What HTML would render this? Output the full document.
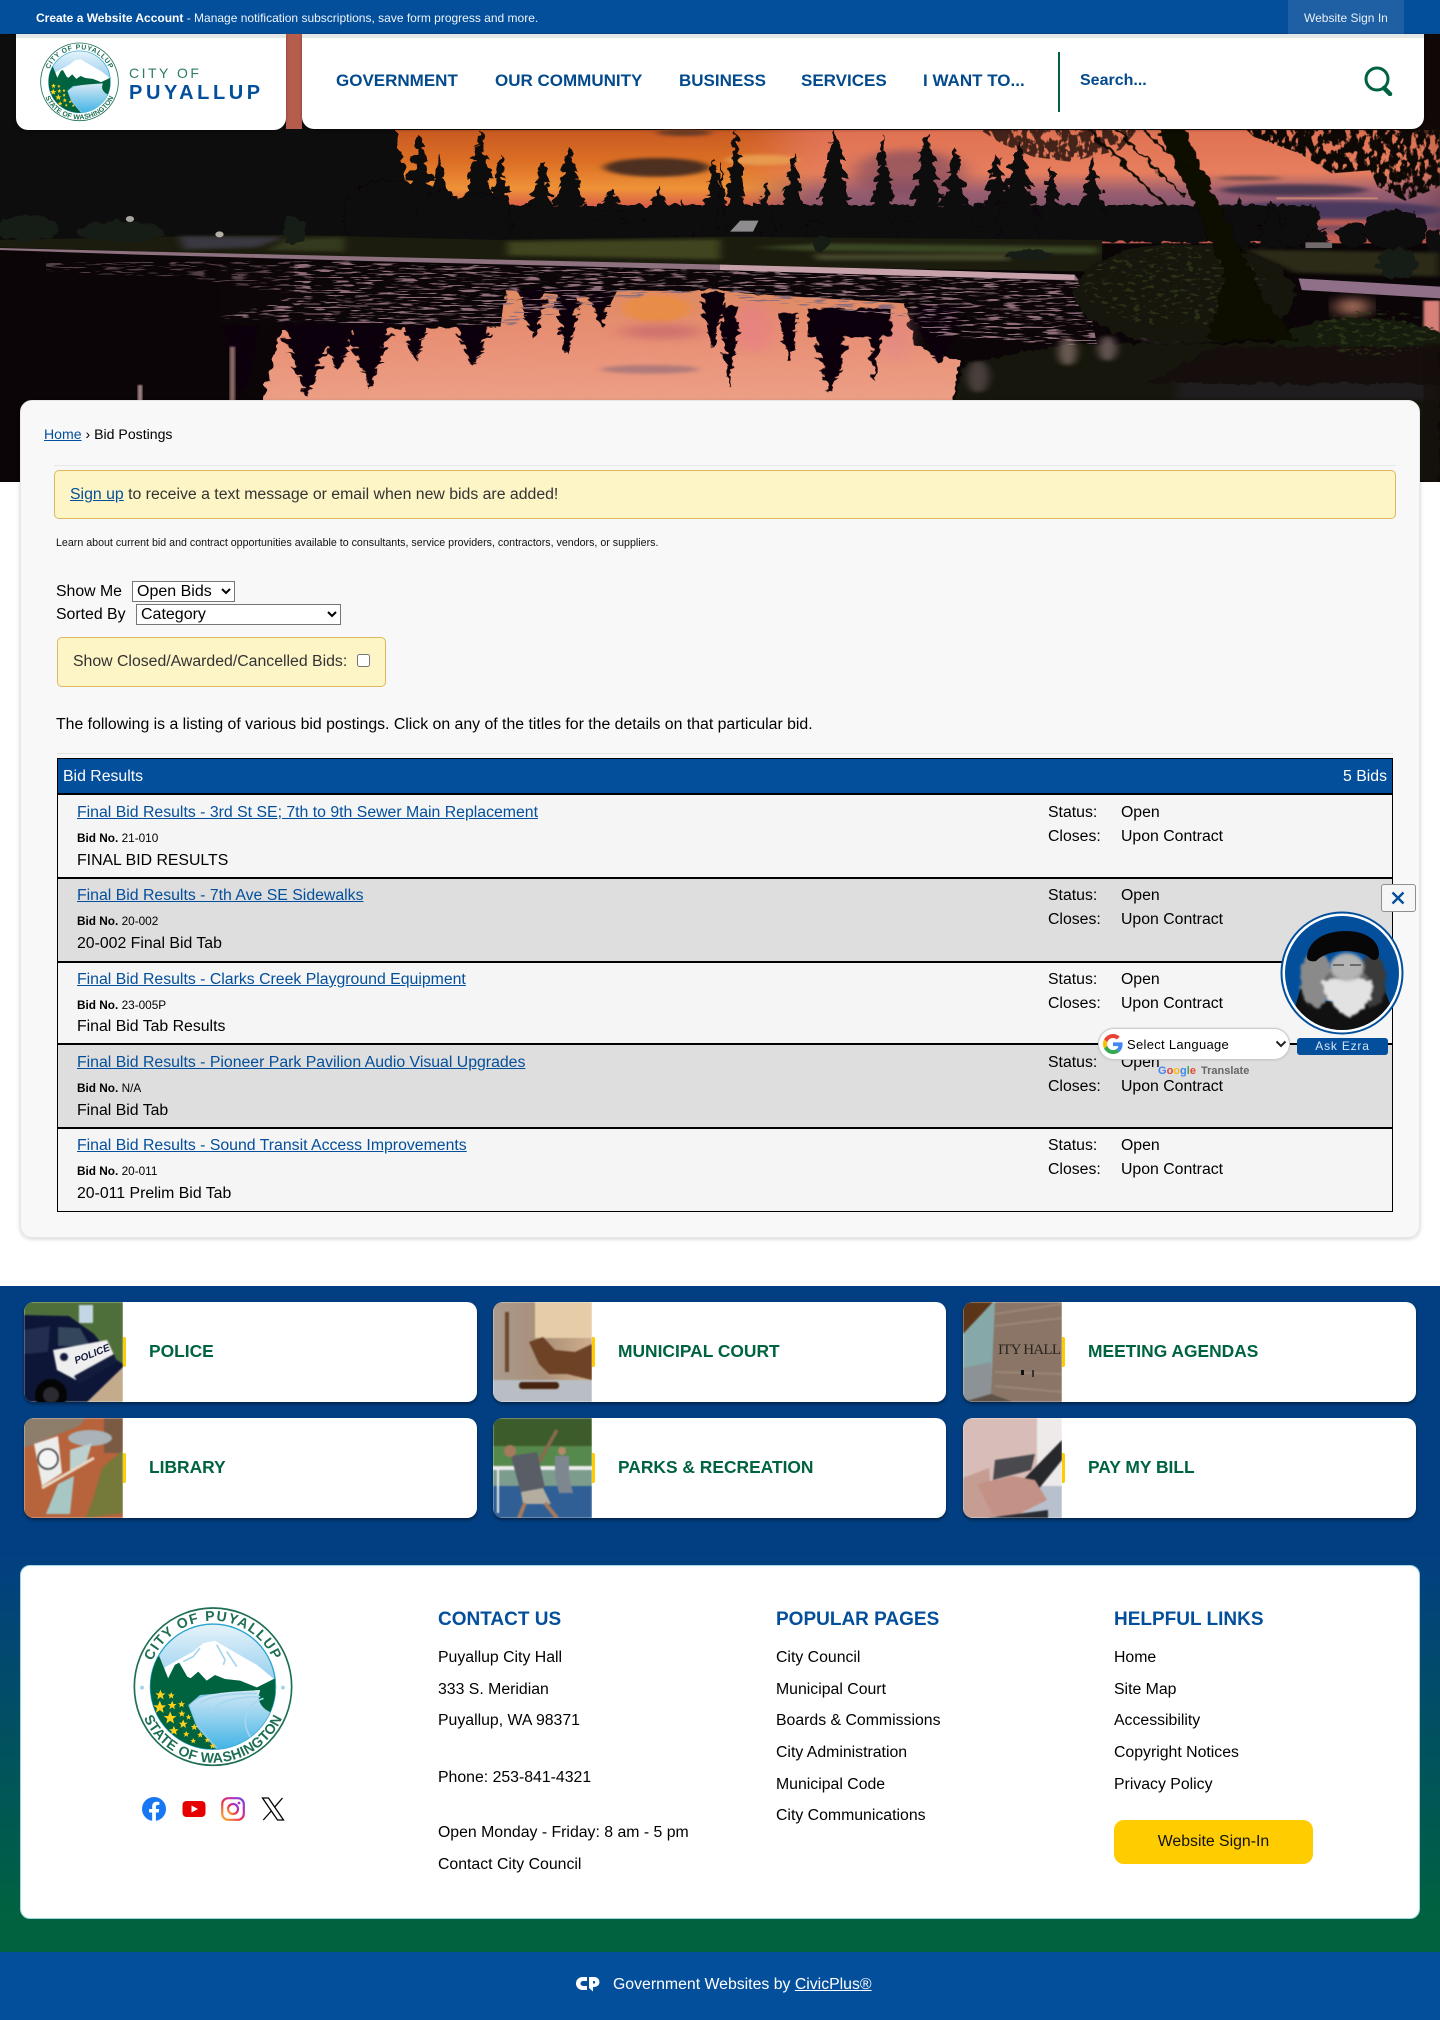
<!DOCTYPE html>
<html lang="en"><head><meta charset="utf-8"><title>Bid Postings - City of Puyallup</title>
<style>
html,body{margin:0;padding:0;background:#fff}
body{position:relative;width:1440px;height:2020px;overflow:hidden;font-family:"Liberation Sans",Arial,sans-serif;font-size:15.84px;color:#000}
.a{position:absolute}
.t{position:absolute;white-space:nowrap;line-height:20px;margin-top:1px}
a{color:inherit;text-decoration:none}
.lk{color:#034f9b;text-decoration:underline}
.nav{font-weight:700;font-size:17px;color:#034a8c;top:70px}
.row{position:absolute;left:58px;width:1334px;height:82px}
.tile{position:absolute;width:453px;height:100px;background:#fff;border-radius:10px;overflow:hidden;box-shadow:0 2px 3px rgba(0,0,0,.45)}
.tile svg{position:absolute;left:0;top:0}
.tick{position:absolute;left:99px;top:35px;width:3px;height:30px;background:#ffcc00;border-radius:0 2px 2px 0}
.tile span{position:absolute;left:125px;top:39px;line-height:20px;font-weight:700;font-size:17.4px;color:#00633f;white-space:nowrap}
.fh{font-weight:700;font-size:19px;color:#034f9b}
.bn{font-size:11.8px}
select{font-family:"Liberation Sans",Arial,sans-serif;font-size:16px;padding:0;margin:0;box-sizing:border-box;position:absolute;background:#fff;color:#000}
</style></head><body>

<!-- HERO -->
<div class="a" style="left:0;top:34px;width:1440px;height:448px;overflow:hidden;background:#0a0506">
<svg width="1440" height="448" viewBox="0 -288 3136 1344" preserveAspectRatio="none" style="display:block">
<defs>
<linearGradient id="skyL" gradientUnits="userSpaceOnUse" x1="0" y1="0" x2="0" y2="320"><stop offset="0" stop-color="#c85a22"/><stop offset=".3" stop-color="#dc6f24"/><stop offset=".55" stop-color="#ee9238"/><stop offset=".72" stop-color="#d85d4a"/><stop offset="1" stop-color="#b04a3c"/></linearGradient>
<linearGradient id="skyR" gradientUnits="userSpaceOnUse" x1="0" y1="0" x2="0" y2="320"><stop offset="0" stop-color="#df7152"/><stop offset=".4" stop-color="#e67e5e"/><stop offset=".58" stop-color="#9a5e70"/><stop offset=".9" stop-color="#6a4a68"/><stop offset="1" stop-color="#c05c50"/></linearGradient>
<linearGradient id="refl" gradientUnits="userSpaceOnUse" x1="0" y1="460" x2="0" y2="810"><stop offset="0" stop-color="#dd8a60"/><stop offset=".45" stop-color="#e88f74"/><stop offset="1" stop-color="#ec9f86"/></linearGradient>
<path id="c" d="M0 0L3 12L1.500 12L6 26L3 26L9 42L5 42L12 60L7 60L15 80L9 80L14 100L-14 100L-9 80L-15 80L-7 60L-12 60L-5 42L-9 42L-3 26L-6 26L-1.500 12L-3 12Z"/>
<filter id="skb" x="-5%" y="-5%" width="110%" height="110%" color-interpolation-filters="sRGB"><feGaussianBlur stdDeviation="60 0"/></filter>
<filter id="b5" x="-30%" y="-30%" width="160%" height="160%" color-interpolation-filters="sRGB"><feGaussianBlur stdDeviation="24 12"/></filter>
<filter id="b3" x="-20%" y="-30%" width="140%" height="160%" color-interpolation-filters="sRGB"><feGaussianBlur stdDeviation="9 5"/></filter>
<filter id="b1" color-interpolation-filters="sRGB"><feGaussianBlur stdDeviation="3 2"/></filter>
<filter id="rg" x="-5%" y="-5%" width="110%" height="110%"><feTurbulence type="fractalNoise" baseFrequency=".05 .04" numOctaves="2" seed="3"/><feDisplacementMap in="SourceGraphic" scale="26" xChannelSelector="R" yChannelSelector="G"/></filter>
<filter id="fl" x="0" y="0" width="100%" height="100%" color-interpolation-filters="sRGB"><feTurbulence type="fractalNoise" baseFrequency=".022 .2" numOctaves="2" seed="4" result="n"/><feColorMatrix in="n" type="matrix" values="0 0 0 0 .56 0 0 0 0 .43 0 0 0 0 .48 11 0 0 0 -6.100"/><feComposite in2="SourceGraphic" operator="in"/></filter>
<filter id="fg" x="0" y="0" width="100%" height="100%" color-interpolation-filters="sRGB"><feTurbulence type="fractalNoise" baseFrequency=".06 .09" numOctaves="2" seed="11" result="n"/><feColorMatrix in="n" type="matrix" values="0 0 0 0 .2 0 0 0 0 .23 0 0 0 0 .1 9 0 0 0 -5.200"/><feComposite in2="SourceGraphic" operator="in"/></filter>
<filter id="lv" x="0" y="0" width="100%" height="100%" color-interpolation-filters="sRGB"><feTurbulence type="fractalNoise" baseFrequency=".07 .03" numOctaves="3" seed="6" result="n"/><feColorMatrix in="n" type="matrix" values="0 0 0 0 .06 0 0 0 0 .035 0 0 0 0 .025 12 0 0 0 -4.800"/><feComposite in2="SourceGraphic" operator="in"/></filter>
</defs>
<!-- sky -->
<g filter="url(#skb)">
<rect x="700" y="0" width="1000" height="340" fill="url(#skyL)"/>
<rect x="1700" y="0" width="1500" height="340" fill="url(#skyR)"/>
</g>
<g filter="url(#b3)">
<ellipse cx="1430" cy="112" rx="115" ry="28" fill="#4e3020"/>
<ellipse cx="1490" cy="8" rx="60" ry="10" fill="#6a3c26"/>
<ellipse cx="1660" cy="90" rx="80" ry="16" fill="#e89a4f"/>
<ellipse cx="2818" cy="180" rx="160" ry="17" fill="#4a3850"/>
<ellipse cx="2900" cy="240" rx="240" ry="26" fill="#4c3a5e"/>
<ellipse cx="2720" cy="145" rx="70" ry="5" fill="#5f4448"/>
<ellipse cx="2880" cy="278" rx="160" ry="10" fill="#c05c50"/>
</g>
<ellipse cx="1980" cy="130" rx="120" ry="70" fill="#7a4860" opacity=".65" filter="url(#b5)"/>
<path d="M2780 205H3000" stroke="#d59078" stroke-width="6" opacity=".8"/>
<rect x="0" y="-288" width="20" height="1344" fill="#090506"/>
<!-- trees -->
<g fill="#0f0709" filter="url(#rg)">
<path d="M-30 -288H830L860 0L880 100L900 360H-30Z"/>
<rect x="1080" y="225" width="1790" height="112"/>
<use href="#c" transform="translate(915,10) scale(3.4,3.4)"/>
<use href="#c" transform="translate(955,70) scale(2.3,2.8)"/>
<use href="#c" transform="translate(1045,5) scale(3.2,3.4)"/>
<use href="#c" transform="translate(1090,70) scale(2,2.8)"/>
<use href="#c" transform="translate(1180,95) scale(2.8,2.5)"/>
<use href="#c" transform="translate(1240,50) scale(3.2,2.9)"/>
<use href="#c" transform="translate(1330,175) scale(3.6,1.6)"/>
<use href="#c" transform="translate(1435,170) scale(2.7,1.7)"/>
<use href="#c" transform="translate(1490,210) scale(2,1.3)"/>
<use href="#c" transform="translate(1555,90) scale(2,2.5)"/>
<use href="#c" transform="translate(1603,-5) scale(1.8,3.4)"/>
<use href="#c" transform="translate(1570,100) scale(1,2.4)"/>
<use href="#c" transform="translate(1728,75) scale(2.3,2.6)"/>
<use href="#c" transform="translate(1668,150) scale(1.500,1.900)"/>
<use href="#c" transform="translate(1818,0) scale(3.2,3.4)"/>
<use href="#c" transform="translate(1923,20) scale(2.3,3.2)"/>
<use href="#c" transform="translate(2018,10) scale(3.2,3.3)"/>
<use href="#c" transform="translate(2078,50) scale(2.800,2.900)"/>
<use href="#c" transform="translate(2170,70) scale(3,2.700)"/>
<use href="#c" transform="translate(2218,40) scale(3.700,3)"/>
<use href="#c" transform="translate(2290,110) scale(2.300,2.300)"/>
<use href="#c" transform="translate(2378,80) scale(2.800,2.600)"/>
<use href="#c" transform="translate(2698,200) scale(2.300,1.500)"/>
<use href="#c" transform="translate(2770,215) scale(2.300,1.400)"/>
<use href="#c" transform="translate(2810,235) scale(2,1.200)"/>
<use href="#c" transform="translate(2870,280) scale(2.300,.8)"/>
<ellipse cx="2945" cy="315" rx="32" ry="38"/>
<ellipse cx="3040" cy="300" rx="72" ry="60"/>
<ellipse cx="3125" cy="340" rx="18" ry="40"/>
<ellipse cx="840" cy="265" rx="95" ry="115"/>
<ellipse cx="1040" cy="285" rx="72" ry="95"/>
<ellipse cx="960" cy="280" rx="60" ry="100"/>
</g>
<!-- ground -->
<path d="M0 330L370 320L640 315L1090 330L1568 320L2400 330L2400 425L1568 408L800 384L0 352Z" fill="#1c1c0e"/>
<g filter="url(#b3)">
<path d="M390 318L620 322L560 352L400 358Z" fill="#3a3840"/>
<path d="M630 326L750 322V365L580 360Z" fill="#343a1e"/>
<path d="M1105 335L1568 328V388L1105 376Z" fill="#40451f"/>
<path d="M1640 352L1800 340L2390 350V372L1760 362Z" fill="#3a4724"/>
<path d="M1770 372H2200V392L1780 390Z" fill="#45452a"/>
<path d="M2708 358L3136 368V440L2820 428Z" fill="#2c2b18"/>
</g>
<g fill="#191a12" filter="url(#rg)">
<ellipse cx="60" cy="295" rx="70" ry="38"/>
<ellipse cx="265" cy="305" rx="95" ry="32"/>
<ellipse cx="642" cy="300" rx="25" ry="42"/>
<ellipse cx="1788" cy="340" rx="17" ry="22"/>
<ellipse cx="2240" cy="375" rx="55" ry="18"/>
<ellipse cx="3043" cy="400" rx="42" ry="45"/>
</g>
<path d="M1590 305L1612 272H1652L1640 305Z" fill="#8f8c90"/>
<rect x="2843" y="337" width="58" height="17" fill="#706a6a"/>
<circle cx="283" cy="267" r="9" fill="#a8a4a0"/>
<circle cx="478" cy="313" r="9" fill="#b4b0a8"/>
<!-- water -->
<path d="M0 356L800 384L1568 408L2348 438L3136 478V1056H0Z" fill="#0b0507"/>
<!-- reflection bright -->
<path d="M570 830L610 600L1085 590L1105 462L1130 455L1560 480L1620 490L1970 510L1990 640L2090 700L2070 830Z" fill="url(#refl)" filter="url(#rg)"/>
<ellipse cx="1430" cy="535" rx="75" ry="40" fill="#e88d47" filter="url(#b3)"/>
<g filter="url(#b5)" opacity=".75">
<ellipse cx="1440" cy="605" rx="90" ry="22" fill="#c8686c"/>
<ellipse cx="1640" cy="590" rx="42" ry="80" fill="#e77f85"/>
<ellipse cx="1950" cy="620" rx="20" ry="80" fill="#df8590"/>
</g>
<ellipse cx="1415" cy="718" rx="105" ry="13" fill="#b07a7a" filter="url(#b3)"/>
<!-- lily band dark -->
<g fill="#0d0609">
<path d="M480 400L1568 420L1568 470L1500 485L1345 480L1330 520L1275 500L1100 480L1090 590H480Z"/>
<path d="M1568 425L2360 445L2380 640L2080 560L1970 520L1620 490L1568 480Z"/>
</g>
<g filter="url(#rg)" fill="#0d0609">
<use href="#c" transform="translate(525,815) scale(3,-2.300)"/>
<use href="#c" transform="translate(670,800) scale(4,-2.200)"/>
<use href="#c" transform="translate(735,720) scale(3,-1.400)"/>
<use href="#c" transform="translate(805,775) scale(3.400,-2)"/>
<use href="#c" transform="translate(905,695) scale(1.800,-1.100)"/>
<use href="#c" transform="translate(1030,715) scale(2.600,-1.300)"/>
<use href="#c" transform="translate(1160,625) scale(2.200,-1.500)"/>
<use href="#c" transform="translate(1235,675) scale(2.200,-2)"/>
<use href="#c" transform="translate(1310,590) scale(1.800,-1.100)"/>
<use href="#c" transform="translate(1552,650) scale(2,-1.600)"/>
<use href="#c" transform="translate(1590,770) scale(1.500,-2.400)"/>
<use href="#c" transform="translate(1718,690) scale(1.600,-1.400)"/>
<use href="#c" transform="translate(1808,790) scale(2.600,-1.800)"/>
<use href="#c" transform="translate(1905,755) scale(1,-1.600)"/>
<use href="#c" transform="translate(2045,700) scale(4,-1.700)"/>
<rect x="1760" y="535" width="180" height="85"/>
</g>
<rect x="0" y="600" width="490" height="460" fill="#0b0507"/>
<rect x="300" y="765" width="10" height="50" fill="#a88a88" filter="url(#b1)"/>
<rect x="500" y="650" width="12" height="165" fill="#8c6a66" filter="url(#b1)"/>
<!-- lily flecks -->
<path d="M100 398L800 392L800 560L480 560L660 500L400 440L100 430Z" fill="#000" filter="url(#fl)" opacity=".55"/>
<path d="M640 395L1568 420L2360 448L2390 650L2040 620L1970 560L1620 510L1560 480L1330 510L1100 590L480 570L640 500Z" fill="#000" filter="url(#fl)"/>
<!-- shore strip -->
<path d="M0 354L300 364L800 380L1568 404L2340 434L2350 452L1950 436L1568 420L800 393L300 374L0 360Z" fill="#8f7280"/>
<path d="M1568 404L1980 418L2340 434V450L1950 436L1568 420Z" fill="#c8a2aa"/>
<path d="M2828 445L3136 470V505L2835 480Z" fill="#8f7088"/>
<!-- right dark -->
<path d="M2075 830L2100 700L2340 640L2640 640L3136 620V1056H2075Z" fill="#14120c" filter="url(#rg)"/>
<path d="M2560 730H3136V810H2560Z" fill="#1f1d1d" filter="url(#b3)"/>
<g filter="url(#b3)" opacity=".6">
<ellipse cx="2325" cy="665" rx="20" ry="42" fill="#a08880"/>
<ellipse cx="2412" cy="655" rx="20" ry="38" fill="#96807e"/>
<ellipse cx="2530" cy="610" rx="55" ry="26" fill="#85727a"/>
<ellipse cx="2130" cy="740" rx="24" ry="48" fill="#6c5c5c"/>
</g>
<ellipse cx="2945" cy="530" rx="32" ry="28" fill="#b57864" filter="url(#b5)"/>
<rect x="3100" y="512" width="36" height="100" fill="#d87f78" filter="url(#b1)"/>
<g filter="url(#rg)">
<ellipse cx="2580" cy="490" rx="240" ry="150" fill="#14160b"/>
<ellipse cx="2960" cy="640" rx="190" ry="75" fill="#161a0c"/>
<path d="M2640 650H3136V760H2500Z" fill="#12110a"/>
</g>
<ellipse cx="2560" cy="470" rx="200" ry="120" fill="#000" filter="url(#fg)" opacity=".7"/>
<ellipse cx="2990" cy="610" rx="140" ry="70" fill="#000" filter="url(#fg)" opacity=".7"/>
<!-- big tree -->
<g fill="#0c0705" filter="url(#rg)">
<path d="M2508 -40H2568L2650 210L2690 320L2750 500L2820 630H2630L2668 430L2608 240Z"/>
</g>
<g stroke="#0d0806" fill="none" filter="url(#rg)">
<path d="M2370 0L2540 230" stroke-width="8"/>
<path d="M2430 0L2580 200" stroke-width="6"/>
<path d="M2490 0L2590 120" stroke-width="5"/>
</g>
<!-- foliage -->
<path d="M2130 -5H2480L2440 60L2330 95L2250 80L2180 40Z" fill="#000" filter="url(#lv)" opacity=".75"/>
<path d="M2700 -20L3020 -20L2990 120L2900 130L2830 70L2730 20Z" fill="#000" filter="url(#lv)"/>
<path d="M2985 -20H3136V170L3060 212L3000 170L2975 90Z" fill="#000" filter="url(#lv)"/>
<rect x="3095" y="-288" width="41" height="300" fill="#130a07" opacity=".7"/>
<rect x="3100" y="640" width="36" height="420" fill="#140e0a" opacity=".6"/>
</svg>
</div>
<div class="a" style="left:286px;top:34px;width:16px;height:95px;background:#b65c4c"></div>

<!-- TOP BAR -->
<div class="a" style="left:0;top:0;width:1440px;height:34px;background:#034f9b;border-bottom:1px solid #0a4a90;box-sizing:border-box"></div>
<div class="a" style="left:1288px;top:0;width:116px;height:34px;background:#1f5fa3"></div>
<div class="t" style="left:36px;top:7px;font-size:12px;color:#eef4fa"><b style="color:#fff">Create a Website Account</b> - Manage notification subscriptions, save form progress and more.</div>
<div class="t" style="left:1304px;top:7px;font-size:12px;color:#e8f0f8">Website Sign In</div>

<!-- LOGO BOX -->
<div class="a" style="left:16px;top:34px;width:270px;height:96px;background:#fff;border-radius:0 0 12px 12px;border-top:4px solid #e4e7e7;box-sizing:border-box;box-shadow:0 1px 3px rgba(0,0,0,.3)"></div>
<svg class="a" style="left:40px;top:42px" width="79" height="80" viewBox="100 82 478 478">
<defs><clipPath id="i1"><circle cx="339" cy="320" r="187"/></clipPath><linearGradient id="s1" x1="0" y1="0" x2="0" y2="1"><stop offset="0" stop-color="#e6f3fa"/><stop offset=".55" stop-color="#86c8ec"/></linearGradient><linearGradient id="r1" x1="0" y1="0" x2="0" y2="1"><stop offset="0" stop-color="#d5e9f5"/><stop offset="1" stop-color="#40b3e6"/></linearGradient>
<path id="st" d="M0-1L.29-.31L.95-.31L.42.12L.59.81L0 .4L-.59.81L-.42.12L-.95-.31L-.29-.31Z"/></defs>
<circle cx="339" cy="320" r="235" fill="#fff" stroke="#1e6e55" stroke-width="5"/>
<circle cx="339" cy="320" r="187" fill="url(#s1)" stroke="#2aa3cf" stroke-width="4"/>
<g clip-path="url(#i1)"><path d="M195 262L280 215L310 190L345 183L400 215L470 255L525 300V340H195Z" fill="#fff"/>
<path d="M150 520V260L178 228L205 295L225 255L238 248L262 290L272 295L295 275L320 302L345 285L375 297L420 302L470 322L525 295V420L470 370L480 330L300 345L265 375L290 440L360 520Z" fill="#00633f"/>
<path d="M480 330C400 335 300 335 270 375C280 420 320 470 360 510H520V400C490 390 465 365 480 330Z" fill="url(#r1)"/>
<g fill="#ffd11a"><use href="#st" transform="translate(182,345) scale(16)"/><use href="#st" transform="translate(214,347) scale(11)"/><use href="#st" transform="translate(180,382) scale(20)"/><use href="#st" transform="translate(217,376) scale(14)"/><use href="#st" transform="translate(245,373) scale(11)"/><use href="#st" transform="translate(211,414) scale(20)"/><use href="#st" transform="translate(246,401) scale(11)"/><use href="#st" transform="translate(250,432) scale(14)"/><use href="#st" transform="translate(283,441) scale(11)"/><use href="#st" transform="translate(222,452) scale(15)"/><use href="#st" transform="translate(259,462) scale(10)"/><use href="#st" transform="translate(301,464) scale(10)"/></g></g>
<path id="t1" d="M142 320A197 197 0 0 1 536 320" fill="none"/>
<path id="b1p" d="M112 320A227 227 0 0 0 566 320" fill="none"/>
<text font-family="Liberation Sans,Arial,sans-serif" font-weight="700" font-size="42" fill="#1e6e55" letter-spacing="4" text-anchor="middle"><textPath href="#t1" startOffset="50%">CITY OF PUYALLUP</textPath></text>
<text font-family="Liberation Sans,Arial,sans-serif" font-weight="700" font-size="42" fill="#1e6e55" letter-spacing="1" text-anchor="middle"><textPath href="#b1p" startOffset="50%">STATE OF WASHINGTON</textPath></text>
</svg>
<div class="t" style="left:129px;top:62px;font-size:14px;letter-spacing:2.5px;color:#2f7c63">CITY OF</div>
<div class="t" style="left:129px;top:82px;font-size:20px;font-weight:700;letter-spacing:3.6px;color:#034f9b">PUYALLUP</div>

<!-- NAV BOX -->
<div class="a" style="left:302px;top:34px;width:1122px;height:95px;background:#fff;border-radius:0 0 12px 12px;border-top:4px solid #e4e7e7;box-sizing:border-box;box-shadow:0 1px 3px rgba(0,0,0,.3)"></div>
<div class="t nav" style="left:336px">GOVERNMENT</div>
<div class="t nav" style="left:495px">OUR COMMUNITY</div>
<div class="t nav" style="left:679px">BUSINESS</div>
<div class="t nav" style="left:801px">SERVICES</div>
<div class="t nav" style="left:923px">I WANT TO...</div>
<div class="a" style="left:1058px;top:52px;width:2px;height:60px;background:#00633f"></div>
<div class="t" style="left:1080px;top:70px;font-weight:700;font-size:16px;color:#034a8c">Search...</div>
<svg class="a" style="left:1362px;top:66px" width="32" height="30" viewBox="0 0 32 30"><circle cx="15" cy="13" r="11" fill="none" stroke="#00633f" stroke-width="3"/><path d="M22 22L28 28" stroke="#00633f" stroke-width="4.500" stroke-linecap="round"/></svg>

<!-- CONTENT CARD -->
<div class="a" style="left:20px;top:400px;width:1400px;height:838px;background:#f8f8f8;border-radius:12px;box-sizing:border-box;border:1px solid #e8e8e8;box-shadow:0 1px 4px rgba(0,0,0,.18)"></div>
<div class="t" style="left:44px;top:423px;font-size:14.1px"><a class="lk" href="#">Home</a> › Bid Postings</div>
<div class="a" style="left:54px;top:465px;width:1342px;height:1px;background:#e8e8e8"></div>
<div class="a" style="left:54px;top:470px;width:1342px;height:49px;background:#fdf5c6;border:1px solid #dcb95e;border-radius:5px;box-sizing:border-box"></div>
<div class="t" style="left:70px;top:484px;color:#333"><a class="lk" href="#">Sign up</a> to receive a text message or email when new bids are added!</div>
<div class="t" style="left:56px;top:532px;font-size:10.66px;color:#111">Learn about current bid and contract opportunities available to consultants, service providers, contractors, vendors, or suppliers.</div>
<div class="t" style="left:56px;top:581px">Show Me</div>
<select style="left:132px;top:581px;width:103px;height:21px"><option>Open Bids</option></select>
<div class="t" style="left:56px;top:604px">Sorted By</div>
<select style="left:136px;top:604px;width:205px;height:21px"><option>Category</option></select>
<div class="a" style="left:57px;top:637px;width:329px;height:50px;background:#fdf5c6;border:1px solid #dcb95e;border-radius:5px;box-sizing:border-box"></div>
<div class="t" style="left:73px;top:651px;color:#333">Show Closed/Awarded/Cancelled Bids:</div>
<input type="checkbox" class="a" style="left:357px;top:654px;margin:0;width:13px;height:13px">
<div class="t" style="left:56px;top:714px">The following is a listing of various bid postings. Click on any of the titles for the details on that particular bid.</div>
<div class="a" style="left:57px;top:753px;width:1336px;height:1px;background:#e4e4e4"></div>

<!-- TABLE -->
<div class="a" style="left:57px;top:758px;width:1336px;height:37px;background:#034f9b;border:1px solid #000;border-bottom-width:2px;box-sizing:border-box"></div>
<div class="t" style="left:63px;top:766px;color:#fff">Bid Results</div>
<div class="t" style="right:53px;top:766px;color:#fff">5 Bids</div>
<div class="row" style="top:795px;height:83px;background:#f5f5f5"></div>
<div class="row" style="top:878px;height:84px;background:#dedede"></div>
<div class="row" style="top:962px;height:82px;background:#f5f5f5"></div>
<div class="row" style="top:1044px;height:84px;background:#dedede"></div>
<div class="row" style="top:1128px;height:83px;background:#f5f5f5"></div>
<div class="a" style="left:57px;top:795px;width:1336px;height:417px;border:1px solid #000;border-top:0;box-sizing:border-box"></div>
<div class="a" style="left:57px;top:877px;width:1336px;height:2px;background:#000"></div>
<div class="a" style="left:57px;top:961px;width:1336px;height:2px;background:#000"></div>
<div class="a" style="left:57px;top:1043px;width:1336px;height:2px;background:#000"></div>
<div class="a" style="left:57px;top:1127px;width:1336px;height:2px;background:#000"></div>

<div class="t lk" style="left:77px;top:802px">Final Bid Results - 3rd St SE; 7th to 9th Sewer Main Replacement</div>
<div class="t bn" style="left:77px;top:827px"><b>Bid No.</b> 21-010</div>
<div class="t" style="left:77px;top:850px">FINAL BID RESULTS</div>
<div class="t" style="left:1048px;top:802px">Status:</div><div class="t" style="left:1121px;top:802px">Open</div>
<div class="t" style="left:1048px;top:826px">Closes:</div><div class="t" style="left:1121px;top:826px">Upon Contract</div>

<div class="t lk" style="left:77px;top:885px">Final Bid Results - 7th Ave SE Sidewalks</div>
<div class="t bn" style="left:77px;top:910px"><b>Bid No.</b> 20-002</div>
<div class="t" style="left:77px;top:933px">20-002 Final Bid Tab</div>
<div class="t" style="left:1048px;top:885px">Status:</div><div class="t" style="left:1121px;top:885px">Open</div>
<div class="t" style="left:1048px;top:909px">Closes:</div><div class="t" style="left:1121px;top:909px">Upon Contract</div>

<div class="t lk" style="left:77px;top:969px">Final Bid Results - Clarks Creek Playground Equipment</div>
<div class="t bn" style="left:77px;top:994px"><b>Bid No.</b> 23-005P</div>
<div class="t" style="left:77px;top:1016px">Final Bid Tab Results</div>
<div class="t" style="left:1048px;top:969px">Status:</div><div class="t" style="left:1121px;top:969px">Open</div>
<div class="t" style="left:1048px;top:993px">Closes:</div><div class="t" style="left:1121px;top:993px">Upon Contract</div>

<div class="t lk" style="left:77px;top:1052px">Final Bid Results - Pioneer Park Pavilion Audio Visual Upgrades</div>
<div class="t bn" style="left:77px;top:1077px"><b>Bid No.</b> N/A</div>
<div class="t" style="left:77px;top:1100px">Final Bid Tab</div>
<div class="t" style="left:1048px;top:1052px">Status:</div><div class="t" style="left:1121px;top:1052px">Open</div>
<div class="t" style="left:1048px;top:1076px">Closes:</div><div class="t" style="left:1121px;top:1076px">Upon Contract</div>

<div class="t lk" style="left:77px;top:1135px">Final Bid Results - Sound Transit Access Improvements</div>
<div class="t bn" style="left:77px;top:1160px"><b>Bid No.</b> 20-011</div>
<div class="t" style="left:77px;top:1183px">20-011 Prelim Bid Tab</div>
<div class="t" style="left:1048px;top:1135px">Status:</div><div class="t" style="left:1121px;top:1135px">Open</div>
<div class="t" style="left:1048px;top:1159px">Closes:</div><div class="t" style="left:1121px;top:1159px">Upon Contract</div>

<!-- ASK EZRA -->
<div class="a" style="left:1381px;top:884px;width:35px;height:28px;background:#f6f6f6;border:1px solid #8f8f8f;border-radius:3px;box-sizing:border-box"></div>
<svg class="a" style="left:1390px;top:890px" width="16" height="16" viewBox="0 0 16 16"><path d="M2.500 2.500L13.500 13.500M13.500 2.500L2.500 13.500" stroke="#034f9b" stroke-width="2.400"/></svg>
<svg class="a" style="left:1280px;top:911px" width="124" height="124" viewBox="0 0 124 124">
<defs><clipPath id="ez"><circle cx="62" cy="62" r="57"/></clipPath><filter id="ezb" x="-20%" y="-20%" width="140%" height="140%"><feGaussianBlur stdDeviation="1.600"/></filter><filter id="ezr" x="-10%" y="-10%" width="120%" height="120%"><feTurbulence type="fractalNoise" baseFrequency=".2" numOctaves="2" seed="5"/><feDisplacementMap in="SourceGraphic" scale="6" xChannelSelector="R" yChannelSelector="G"/><feGaussianBlur stdDeviation="1"/></filter></defs>
<circle cx="62" cy="62" r="60.500" fill="#fff" stroke="#034f9b" stroke-width="2"/>
<circle cx="62" cy="62" r="57" fill="#034f9b"/>
<g clip-path="url(#ez)">
<path d="M4 124L14 100L22 72L34 90L90 90L102 72L112 98L120 124Z" fill="#111"/>
<g filter="url(#ezr)">
<ellipse cx="36" cy="68" rx="16" ry="28" fill="#8a8a8a"/>
<ellipse cx="92" cy="70" rx="14" ry="26" fill="#3a3a3a"/>
<ellipse cx="66" cy="72" rx="22" ry="18" fill="#6a6a6a"/>
<path d="M42 70Q66 64 92 70Q96 92 70 106Q46 96 42 70Z" fill="#e2e2e2"/>
</g>
<ellipse cx="67" cy="56" rx="17" ry="14" fill="#b4b4b4" filter="url(#ezb)"/>
<path d="M27 46C28 30 44 20 66 20C86 20 100 30 99 44C98 49 95 50 91 48C82 38 50 36 36 50C32 51 27 50 27 46Z" fill="#070707"/>
<path d="M53 54h11M70 54h11" stroke="#555" stroke-width="1.600"/>
</g></svg>
<div class="a" style="left:1297px;top:1038px;width:91px;height:17px;background:#034f9b;border-radius:3px;color:#d6e6f5;font-size:12px;line-height:17px;text-align:center;letter-spacing:.8px">Ask Ezra</div>

<!-- TRANSLATE -->
<div class="a" style="left:1098px;top:1028px;width:192px;height:32px;background:#fff;border:1px solid #ccc;border-radius:16px;box-sizing:border-box;box-shadow:0 0 2px rgba(0,0,0,.15)"></div>
<svg class="a" style="left:1103px;top:1034px" width="20" height="20" viewBox="0 0 48 48"><path fill="#EA4335" d="M24 9.500c3.500 0 6.700 1.200 9.200 3.600l6.900-6.900C35.900 2.400 30.500 0 24 0 14.600 0 6.500 5.400 2.600 13.200l8 6.200C12.400 13.700 17.700 9.500 24 9.500z"/><path fill="#4285F4" d="M47 24.500c0-1.600-.1-3.100-.4-4.500H24v9h12.900c-.6 3-2.200 5.500-4.700 7.200l7.700 6C44.400 38 47 31.800 47 24.500z"/><path fill="#FBBC05" d="M10.500 28.600c-.5-1.400-.8-3-.8-4.600s.3-3.200.8-4.600l-8-6.200C.9 16.400 0 20.100 0 24s.9 7.600 2.600 10.800l7.900-6.200z"/><path fill="#34A853" d="M24 48c6.500 0 11.900-2.100 15.900-5.800l-7.700-6c-2.200 1.500-4.900 2.300-8.200 2.300-6.300 0-11.600-4.200-13.500-9.900l-8 6.200C6.500 42.600 14.600 48 24 48z"/></svg>
<div class="t" style="left:1127px;top:1034px;font-size:13px;letter-spacing:.3px">Select Language</div>
<svg class="a" style="left:1275px;top:1040px" width="12" height="8" viewBox="0 0 12 8"><path d="M1.500 1.500L6 6L10.500 1.500" fill="none" stroke="#222" stroke-width="2"/></svg>
<div class="t" style="left:1158px;top:1060px;font-size:11px;font-weight:700"><span style="color:#4285f4">G</span><span style="color:#ea4335">o</span><span style="color:#fbbc05">o</span><span style="color:#4285f4">g</span><span style="color:#34a853">l</span><span style="color:#ea4335">e</span> <span style="color:#666;margin-left:2px">Translate</span></div>

<!-- BLUE SECTION -->
<div class="a" style="left:0;top:1286px;width:1440px;height:666px;background:linear-gradient(#023f82 0%,#023f82 40%,#00623f 95%)"></div>

<svg width="0" height="0" style="position:absolute"><defs><filter id="soft" x="0" y="0" width="100%" height="100%" color-interpolation-filters="sRGB"><feGaussianBlur stdDeviation=".8"/></filter></defs></svg>

<div class="tile" style="left:24px;top:1302px">
<svg width="99" height="100" viewBox="0 0 99 100"><g filter="url(#soft)"><rect width="99" height="100" fill="#4f6f3a"/><rect x="55" y="3" width="14" height="18" fill="#c3d6e4"/><path d="M0 13L45 14L70 32L88 55L99 62V100H0Z" fill="#0e1638"/><path d="M34 25L56 26L66 44L34 44Z" fill="#33465a"/><path d="M0 28L26 24L24 50L0 52Z" fill="#222d50"/><path d="M29 48L83 38L91 55L52 78L33 68Z" fill="#efefef"/><path d="M50 74L90 52L93 60L55 82Z" fill="#141c3e"/><path d="M63 100L99 65V100Z" fill="#c3ab8c"/><circle cx="27" cy="93" r="16" fill="#050505"/><circle cx="27" cy="93" r="8" fill="#2a2a30"/><circle cx="40" cy="55" r="4" fill="#141c3e"/></g><text x="52" y="62" font-family="Liberation Sans,sans-serif" font-size="10" font-weight="700" font-style="italic" fill="#141c3e" transform="rotate(-22 52 62)">POLICE</text></svg><div class="tick"></div><span>POLICE</span></div>
<div class="tile" style="left:493px;top:1302px">
<svg width="99" height="100" viewBox="0 0 99 100"><defs><linearGradient id="gv" x1="0" y1="0" x2="1" y2="0"><stop offset="0" stop-color="#a99a8e"/><stop offset=".5" stop-color="#a98f78"/><stop offset="1" stop-color="#cfae8a"/></linearGradient></defs><g filter="url(#soft)"><rect width="99" height="100" fill="url(#gv)"/><rect x="42" y="0" width="57" height="36" fill="#e6cda8"/><rect x="12" y="10" width="4" height="60" fill="#6b4a30"/><rect y="78" width="99" height="22" fill="#b9bec4"/><path d="M36 40L50 35L62 48L82 50L99 42V78L74 72L56 72L46 62Z" fill="#6e4225"/><rect x="26" y="80" width="40" height="7" rx="3" fill="#47240f"/></g></svg><div class="tick"></div><span>MUNICIPAL COURT</span></div>
<div class="tile" style="left:963px;top:1302px">
<svg width="99" height="100" viewBox="0 0 99 100"><g filter="url(#soft)"><rect width="99" height="100" fill="#8a7566"/><path d="M0 0H30L0 32Z" fill="#5c3518"/><path d="M0 32L30 0L32 0L28 92L0 66Z" fill="#86a8a8"/><path d="M0 66L28 60V100H0Z" fill="#8c9296"/><path d="M0 100L28 92L50 100Z" fill="#5d5248"/><path d="M32 12L99 2M32 24L99 16M32 70L99 72M32 84L99 90" stroke="#9c8676" stroke-width="2"/></g><text x="35" y="52" font-family="Liberation Serif,serif" font-size="15" fill="#2a2420" textLength="63" lengthAdjust="spacing">ITY HALL</text><rect x="58" y="68" width="3" height="5" fill="#111"/><rect x="69" y="68" width="2" height="7" fill="#333"/></svg><div class="tick"></div><span>MEETING AGENDAS</span></div>
<div class="tile" style="left:24px;top:1418px">
<svg width="99" height="100" viewBox="0 0 99 100"><g filter="url(#soft)"><rect width="99" height="100" fill="#b7633c"/><rect x="80" y="0" width="19" height="35" fill="#7b5a44"/><path d="M0 0L62 0L55 8L0 30Z" fill="#8d7d6b"/><ellipse cx="66" cy="20" rx="22" ry="8" fill="#a9b3b8"/><path d="M10 26L34 18L38 55L18 68Z" fill="#ececea"/><circle cx="24" cy="41" r="10" fill="#f5f5f5" stroke="#333" stroke-width="1.500"/><path d="M46 32L68 25L62 45L46 55Z" fill="#bcd0cf"/><path d="M78 50L99 32V95L62 100L70 78Z" fill="#75793a"/><path d="M22 96L34 66L50 58L46 96Z" fill="#a7c7c4"/><path d="M18 70L70 40" stroke="#e8d8c5" stroke-width="3"/></g></svg><div class="tick"></div><span>LIBRARY</span></div>
<div class="tile" style="left:493px;top:1418px">
<svg width="99" height="100" viewBox="0 0 99 100"><g filter="url(#soft)"><rect width="99" height="28" fill="#3d5c2b"/><rect y="28" width="99" height="40" fill="#56894c"/><rect y="68" width="99" height="32" fill="#2f5f95"/><rect y="48" width="99" height="4" fill="#ececec"/><path d="M0 52H99V68H0Z" fill="#7c9c8e"/><path d="M5 50V95" stroke="#eee" stroke-width="2"/><path d="M46 44L55 28L64 12" stroke="#8a6a50" stroke-width="3.500" fill="none"/><path d="M18 38L44 34L52 70L28 75Z" fill="#585d66"/><circle cx="17" cy="33" r="6" fill="#a67a5c"/><path d="M28 74L50 70L58 86H30Z" fill="#b5aea0"/><path d="M32 85L26 100M52 85L64 100" stroke="#a67a5c" stroke-width="4"/><path d="M62 38H76V58L80 75H66L62 58Z" fill="#7e8790"/><circle cx="69" cy="33" r="4" fill="#b28a6a"/></g></svg><div class="tick"></div><span>PARKS &amp; RECREATION</span></div>
<div class="tile" style="left:963px;top:1418px">
<svg width="99" height="100" viewBox="0 0 99 100"><g filter="url(#soft)"><rect width="99" height="100" fill="#d8bcb7"/><rect x="74" width="25" height="68" fill="#eeeaea"/><path d="M70 68H99V100H60Z" fill="#b9c0cd"/><path d="M0 60L26 50L30 100H0Z" fill="#c69d92"/><path d="M32 42L72 36L68 52L30 62Z" fill="#4a4a4e"/><path d="M60 62L99 22V42L70 78Z" fill="#26282c"/><path d="M14 66L50 58L72 62L84 82L52 98H30Z" fill="#c39186"/><path d="M24 100L85 92V100Z" fill="#2a2d33"/></g></svg><div class="tick"></div><span>PAY MY BILL</span></div>

<!-- FOOTER CARD -->
<div class="a" style="left:20px;top:1565px;width:1400px;height:354px;background:#fff;border-radius:10px;box-sizing:border-box;border:1px solid #9fd8e0"></div>
<svg class="a" style="left:133px;top:1607px" width="160" height="160" viewBox="100 82 478 478">
<defs><clipPath id="i2"><circle cx="339" cy="320" r="187"/></clipPath><linearGradient id="s2" x1="0" y1="0" x2="0" y2="1"><stop offset="0" stop-color="#e6f3fa"/><stop offset=".55" stop-color="#86c8ec"/></linearGradient><linearGradient id="r2" x1="0" y1="0" x2="0" y2="1"><stop offset="0" stop-color="#d5e9f5"/><stop offset="1" stop-color="#40b3e6"/></linearGradient></defs>
<circle cx="339" cy="320" r="235" fill="#fff" stroke="#1e6e55" stroke-width="5"/>
<circle cx="339" cy="320" r="187" fill="url(#s2)" stroke="#2aa3cf" stroke-width="4"/>
<g clip-path="url(#i2)"><path d="M195 262L280 215L310 190L345 183L400 215L470 255L525 300V340H195Z" fill="#fff"/>
<path d="M350 195L375 240L370 255M380 215L410 260M300 205L280 230L250 245" stroke="#a9d4ee" stroke-width="5" fill="none"/>
<path d="M150 520V260L178 228L205 295L225 255L238 248L262 290L272 295L295 275L320 302L345 285L375 297L420 302L470 322L525 295V420L470 370L480 330L300 345L265 375L290 440L360 520Z" fill="#00633f"/>
<path d="M480 330C400 335 300 335 270 375C280 420 320 470 360 510H520V400C490 390 465 365 480 330Z" fill="url(#r2)"/>
<path d="M300 370C330 345 400 340 470 340M330 400C350 365 400 350 480 350M450 470C420 420 440 370 490 355" stroke="#a7d6ef" stroke-width="5" fill="none"/>
<g fill="#ffd11a"><use href="#st" transform="translate(182,345) scale(16)"/><use href="#st" transform="translate(214,347) scale(11)"/><use href="#st" transform="translate(180,382) scale(20)"/><use href="#st" transform="translate(217,376) scale(14)"/><use href="#st" transform="translate(245,373) scale(11)"/><use href="#st" transform="translate(211,414) scale(20)"/><use href="#st" transform="translate(246,401) scale(11)"/><use href="#st" transform="translate(266,411) scale(9)"/><use href="#st" transform="translate(250,432) scale(14)"/><use href="#st" transform="translate(283,441) scale(11)"/><use href="#st" transform="translate(222,452) scale(15)"/><use href="#st" transform="translate(259,462) scale(10)"/><use href="#st" transform="translate(301,464) scale(10)"/><use href="#st" transform="translate(280,482) scale(9)"/><use href="#st" transform="translate(322,480) scale(9)"/><use href="#st" transform="translate(338,497) scale(10)"/></g></g>
<circle cx="127" cy="323" r="6" fill="#a5d5e8"/><circle cx="548" cy="323" r="6" fill="#a5d5e8"/>
<path id="t2" d="M142 320A197 197 0 0 1 536 320" fill="none"/>
<path id="b2p" d="M112 320A227 227 0 0 0 566 320" fill="none"/>
<text font-family="Liberation Sans,Arial,sans-serif" font-weight="700" font-size="42" fill="#1e6e55" letter-spacing="4" text-anchor="middle"><textPath href="#t2" startOffset="50%">CITY OF PUYALLUP</textPath></text>
<text font-family="Liberation Sans,Arial,sans-serif" font-weight="700" font-size="42" fill="#1e6e55" letter-spacing="1" text-anchor="middle"><textPath href="#b2p" startOffset="50%">STATE OF WASHINGTON</textPath></text>
</svg>
<svg class="a" style="left:142px;top:1797px" width="24" height="24" viewBox="0 0 24 24"><circle cx="12" cy="12" r="12" fill="#1877f2"/><path fill="#fff" d="M16.670 15.470L17.200 12H13.900V9.750c0-.95.46-1.870 1.950-1.870h1.500V4.920s-1.370-.23-2.670-.23c-2.730 0-4.510 1.660-4.510 4.660V12H7.100v3.470h3.050v8.390a12 12 0 0 0 3.750 0v-8.390z"/></svg>
<svg class="a" style="left:182px;top:1797px" width="24" height="24" viewBox="0 0 24 24"><rect x="0.500" y="4" width="23" height="16" rx="4" fill="#e60000"/><path d="M9.500 8.500L16 12L9.500 15.500Z" fill="#fff"/></svg>
<svg class="a" style="left:221px;top:1797px" width="24" height="24" viewBox="0 0 24 24"><defs><linearGradient id="ig" x1="0" y1="1" x2="1" y2="0"><stop offset="0" stop-color="#fdb52a"/><stop offset=".45" stop-color="#e8304f"/><stop offset=".75" stop-color="#b82fc0"/><stop offset="1" stop-color="#5b4fe0"/></linearGradient></defs><rect x="1.200" y="1.200" width="21.600" height="21.600" rx="6" fill="none" stroke="url(#ig)" stroke-width="2.200"/><circle cx="12" cy="12" r="5" fill="none" stroke="url(#ig)" stroke-width="2.200"/><circle cx="18" cy="6" r="1.400" fill="#b82fc0"/></svg>
<svg class="a" style="left:261px;top:1797px" width="24" height="24" viewBox="0 0 24 24"><path d="M1.500 1H7.500L22.500 23H16.500Z" fill="none" stroke="#000" stroke-width="1.300"/><path d="M21.500 1L13.500 10.300M10.700 13.500L2.300 23" fill="none" stroke="#000" stroke-width="1.300"/></svg>

<div class="t fh" style="left:438px;top:1609px">CONTACT US</div>
<div class="t" style="left:438px;top:1647px">Puyallup City Hall</div>
<div class="t" style="left:438px;top:1679px">333 S. Meridian</div>
<div class="t" style="left:438px;top:1710px">Puyallup, WA 98371</div>
<div class="t" style="left:438px;top:1767px">Phone: 253-841-4321</div>
<div class="t" style="left:438px;top:1822px">Open Monday - Friday: 8 am - 5 pm</div>
<div class="t" style="left:438px;top:1854px">Contact City Council</div>

<div class="t fh" style="left:776px;top:1609px">POPULAR PAGES</div>
<div class="t" style="left:776px;top:1647px">City Council</div>
<div class="t" style="left:776px;top:1679px">Municipal Court</div>
<div class="t" style="left:776px;top:1710px">Boards &amp; Commissions</div>
<div class="t" style="left:776px;top:1742px">City Administration</div>
<div class="t" style="left:776px;top:1774px">Municipal Code</div>
<div class="t" style="left:776px;top:1805px">City Communications</div>

<div class="t fh" style="left:1114px;top:1609px">HELPFUL LINKS</div>
<div class="t" style="left:1114px;top:1647px">Home</div>
<div class="t" style="left:1114px;top:1679px">Site Map</div>
<div class="t" style="left:1114px;top:1710px">Accessibility</div>
<div class="t" style="left:1114px;top:1742px">Copyright Notices</div>
<div class="t" style="left:1114px;top:1774px">Privacy Policy</div>
<div class="a" style="left:1114px;top:1820px;width:199px;height:44px;background:#ffcc00;border-radius:10px;text-align:center;line-height:44px;color:#111">Website Sign-In</div>

<!-- BOTTOM BAR -->
<div class="a" style="left:0;top:1952px;width:1440px;height:68px;background:#034f9b"></div>
<svg class="a" style="left:576px;top:1976px" width="25" height="16" viewBox="0 0 25 16"><path fill="#fff" d="M11 1H6.500A6.500 6.500 0 0 0 6.500 14H11V10H7A2.500 2.500 0 0 1 7 5H11ZM13 1H18.500A5 5 0 0 1 18.500 11H17V15.500L13 12ZM17 5V7.500H18A1.250 1.250 0 0 0 18 5Z"/></svg>
<div class="t" style="left:613px;top:1974px;color:#fff">Government Websites by <span style="text-decoration:underline">CivicPlus®</span></div>
</body></html>
